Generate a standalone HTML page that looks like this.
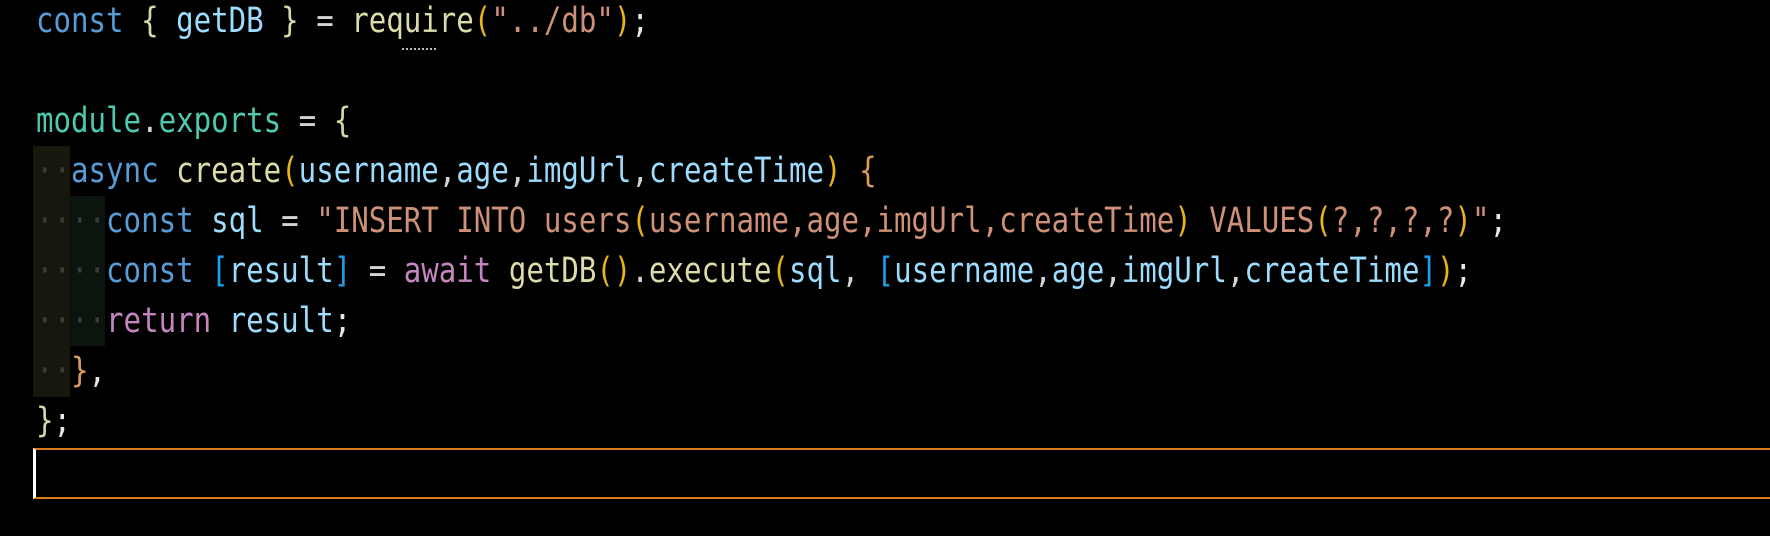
<!DOCTYPE html>
<html><head><meta charset="utf-8"><style>
html,body{margin:0;padding:0;background:#000;width:1770px;height:536px;overflow:hidden}
.code{position:absolute;left:36px;top:-4px;font-family:"DejaVu Sans Mono","Liberation Mono",monospace;font-size:35px;color:#d4d4d4;transform:scaleX(0.831);transform-origin:0 0;width:2200px}
.l{height:50px;line-height:50px;white-space:pre;position:relative}
.k{color:#569cd6}.v{color:#9cdcfe}.f{color:#dcdcaa}.s{color:#ce9178}.p{color:#c586c0}.t{color:#4ec9b0}
.g{color:#e8b418}.b{color:#1aa0e8}.o{color:#d99a5e}.w{color:#e8e8e8}.y{color:#d7d7a8}
.d{color:#3a3a3a}
.g1{position:absolute;left:33px;top:146px;width:37px;height:251px;background:#17170d}
.g2{position:absolute;left:69px;top:196px;width:36px;height:150px;background:#0c140e}
.box{position:absolute;left:33px;top:448px;width:1760px;height:51px;border:2px solid #e07b1a;box-sizing:border-box;border-left:3px solid #fff}
.dots{position:absolute;left:402px;top:48px;width:34px;border-top:2px dotted #bbb}
</style></head><body>
<div class="g1"></div><div class="g2"></div>
<div class="dots"></div>
<div class="code">
<div class="l"><span class="k">const</span> <span class="y">{</span> <span class="v">getDB</span> <span class="y">}</span> = <span class="f">require</span><span class="g">(</span><span class="s">"../db"</span><span class="g">)</span><span class="w">;</span></div>
<div class="l"> </div>
<div class="l"><span class="t">module</span>.<span class="t">exports</span> = <span class="y">{</span></div>
<div class="l"><span class="d">··</span><span class="k">async</span> <span class="f">create</span><span class="g">(</span><span class="v">username</span>,<span class="v">age</span>,<span class="v">imgUrl</span>,<span class="v">createTime</span><span class="g">)</span> <span class="o">{</span></div>
<div class="l"><span class="d">····</span><span class="k">const</span> <span class="v">sql</span> = <span class="s">"INSERT INTO users</span><span class="g">(</span><span class="s">username,age,imgUrl,createTime</span><span class="g">)</span><span class="s"> VALUES</span><span class="g">(</span><span class="s">?,?,?,?</span><span class="g">)</span><span class="s">"</span><span class="w">;</span></div>
<div class="l"><span class="d">····</span><span class="k">const</span> <span class="b">[</span><span class="v">result</span><span class="b">]</span> = <span class="p">await</span> <span class="f">getDB</span><span class="g">()</span>.<span class="f">execute</span><span class="g">(</span><span class="v">sql</span>, <span class="b">[</span><span class="v">username</span>,<span class="v">age</span>,<span class="v">imgUrl</span>,<span class="v">createTime</span><span class="b">]</span><span class="g">)</span><span class="w">;</span></div>
<div class="l"><span class="d">····</span><span class="p">return</span> <span class="v">result</span><span class="w">;</span></div>
<div class="l"><span class="d">··</span><span class="o">}</span><span class="w">,</span></div>
<div class="l"><span class="y">}</span><span class="w">;</span></div>
</div>
<div class="box"></div>
</body></html>
